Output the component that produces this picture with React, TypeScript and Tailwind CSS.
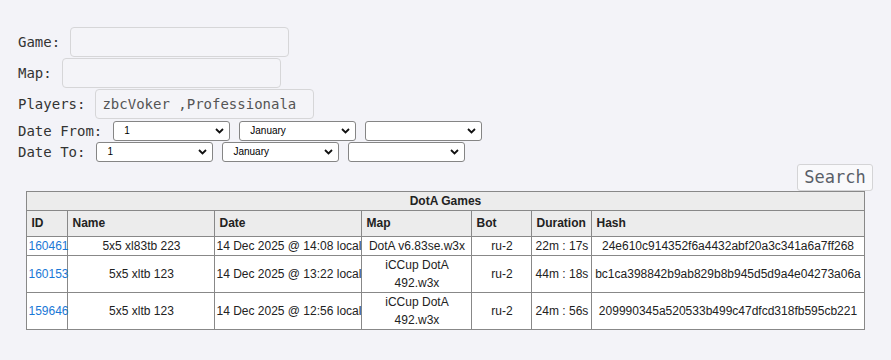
import { useState } from "react";

const days = ["1"];
const months = ["January"];

const games = [
  {
    id: "160461",
    name: "5x5 xl83tb 223",
    date: "14 Dec 2025 @ 14:08 local",
    map: "DotA v6.83se.w3x",
    bot: "ru-2",
    duration: "22m : 17s",
    hash: "24e610c914352f6a4432abf20a3c341a6a7ff268",
  },
  {
    id: "160153",
    name: "5x5 xltb 123",
    date: "14 Dec 2025 @ 13:22 local",
    map: "iCCup DotA 492.w3x",
    bot: "ru-2",
    duration: "44m : 18s",
    hash: "bc1ca398842b9ab829b8b945d5d9a4e04273a06a",
  },
  {
    id: "159646",
    name: "5x5 xltb 123",
    date: "14 Dec 2025 @ 12:56 local",
    map: "iCCup DotA 492.w3x",
    bot: "ru-2",
    duration: "24m : 56s",
    hash: "209990345a520533b499c47dfcd318fb595cb221",
  },
];

const Chevron = () => (
  <svg
    width="9"
    height="6"
    viewBox="0 0 9 6"
    className="pointer-events-none absolute right-[6px] top-[7px]"
  >
    <path d="M1 1 L4.5 4.5 L8 1" fill="none" stroke="#111" strokeWidth="1.8" />
  </svg>
);

const Select = ({ options }: { options: string[] }) => (
  <div className="relative h-[20px]">
    <select
      defaultValue={options[0]}
      className="block w-[117px] h-[20px] appearance-none bg-white border border-[#858585] rounded-[3px] pl-[10px] pr-5 text-[10px] leading-[18px] text-black font-['Liberation_Sans',sans-serif] outline-none"
    >
      {options.map((o, i) => (
        <option key={i} value={o}>
          {o}
        </option>
      ))}
    </select>
    <Chevron />
  </div>
);

const TextField = ({ label, value = "" }: { label: string; value?: string }) => (
  <div className="flex items-center gap-[10px] h-[30px]">
    <span>{label}</span>
    <input
      defaultValue={value}
      readOnly
      className="w-[219px] h-[30px] bg-[#f4f4f8] border border-[#d6d6d8] rounded-[4px] px-[6px] text-[14px] text-[#555] font-['DejaVu_Sans_Mono',monospace] outline-none"
    />
  </div>
);

const App = () => {
  const [dateFrom] = useState(["1", "January", ""]);

  return (
    <div className="min-h-[360px] bg-[#f3f3f8] pt-[27px] px-[18px] font-['DejaVu_Sans_Mono',monospace] text-[14px] leading-[20px] text-[#333]">
      {/* Filters */}
      <div className="flex flex-col gap-px">
        <TextField label="Game:" />
        <TextField label="Map:" />
        <TextField label="Players:" value="zbcVoker ,Professionala" />
      </div>

      <div className="mt-[2px] flex flex-col gap-px">
        <div className="flex items-center h-[20px]">
          <span className="mr-[11px]">Date From:</span>
          <div className="flex gap-[9px]">
            <Select options={days} />
            <Select options={months} />
            <Select options={[dateFrom[2]]} />
          </div>
        </div>
        <div className="flex items-center h-[20px]">
          <span className="mr-[11px]">Date To:</span>
          <div className="flex gap-[9px]">
            <Select options={days} />
            <Select options={months} />
            <Select options={[""]} />
          </div>
        </div>
      </div>

      <div className="flex justify-end mt-[2px]">
        <button className="w-[76px] h-[27px] bg-[#f9f9fb] border border-[#d4d4d6] rounded-[3px] text-[17px] leading-[25px] text-[#5a5f68] font-['DejaVu_Sans_Mono',monospace]">
          Search
        </button>
      </div>

      {/* Games table */}
      <table className="w-[837px] mx-auto table-fixed border-collapse border border-[#888] font-['Liberation_Sans',Arial,sans-serif] text-[12px] leading-[18px] text-[#222]">
        <colgroup>
          <col className="w-[41px]" />
          <col className="w-[147px]" />
          <col className="w-[147px]" />
          <col className="w-[110px]" />
          <col className="w-[60px]" />
          <col className="w-[60px]" />
          <col className="w-[272px]" />
        </colgroup>
        <thead>
          <tr className="bg-[#ececec]">
            <th colSpan={7} className="border border-[#888] font-bold text-center">
              DotA Games
            </th>
          </tr>
          <tr className="bg-[#ececec]">
            {["ID", "Name", "Date", "Map", "Bot", "Duration", "Hash"].map((h) => (
              <th key={h} className="border border-[#888] px-1 py-1 leading-[17px] text-left font-bold">
                {h}
              </th>
            ))}
          </tr>
        </thead>
        <tbody className="bg-white">
          {games.map((g) => (
            <tr key={g.id}>
              <td className="border border-[#888] px-px text-left">
                <a href="#" className="text-[#1a78d6]">
                  {g.id}
                </a>
              </td>
              <td className="border border-[#888] px-px text-center whitespace-nowrap">{g.name}</td>
              <td className="border border-[#888] px-px text-center whitespace-nowrap">{g.date}</td>
              <td className="border border-[#888] px-px text-center">{g.map}</td>
              <td className="border border-[#888] px-px text-center whitespace-nowrap">{g.bot}</td>
              <td className="border border-[#888] px-px text-center whitespace-nowrap">{g.duration}</td>
              <td className="border border-[#888] px-px text-center whitespace-nowrap">{g.hash}</td>
            </tr>
          ))}
        </tbody>
      </table>
    </div>
  );
};

export default App;
